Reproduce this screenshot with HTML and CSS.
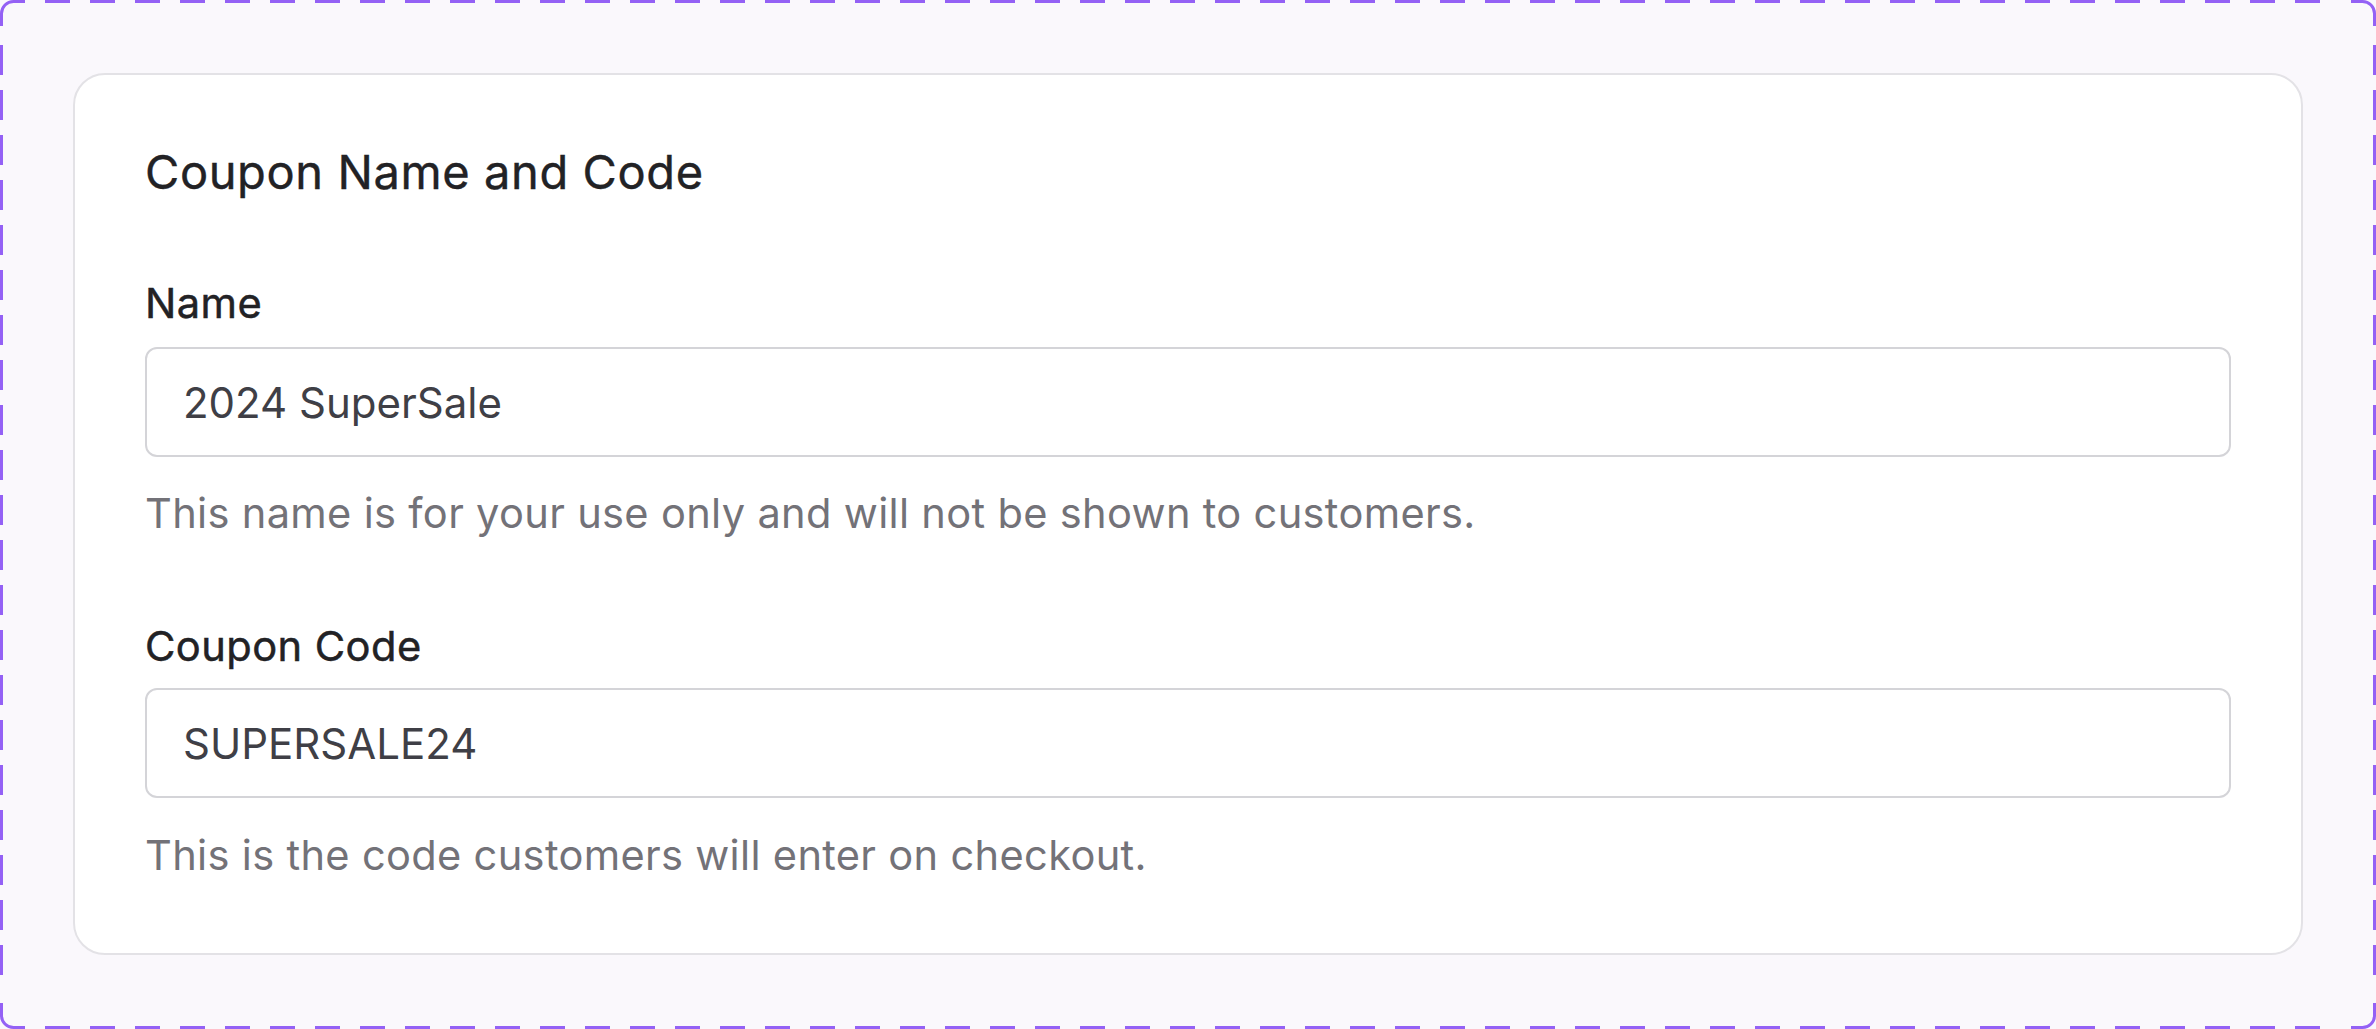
FILE: index.html
```html
<!DOCTYPE html>
<html lang="en">
<head>
<meta charset="utf-8">
<title>Coupon Name and Code</title>
<link rel="stylesheet" href="styles.css">
</head>
<body>
<svg class="frame" width="2376" height="1029" viewBox="0 0 2376 1029" aria-hidden="true">
  <g fill="none" stroke="#9461f5" stroke-width="3">
    <line x1="45" y1="1.5" x2="2331" y2="1.5" stroke-dasharray="25 20"/>
    <line x1="45" y1="1027.5" x2="2331" y2="1027.5" stroke-dasharray="25 20"/>
    <line x1="1.5" y1="45" x2="1.5" y2="984" stroke-dasharray="30 15"/>
    <line x1="2374.5" y1="45" x2="2374.5" y2="984" stroke-dasharray="30 15"/>
    <path d="M1.5 26 V13.5 A12 12 0 0 1 13.5 1.5 H25"/>
    <path d="M2351 1.5 H2362.5 A12 12 0 0 1 2374.5 13.5 V26"/>
    <path d="M1.5 1003 V1015.5 A12 12 0 0 0 13.5 1027.5 H25"/>
    <path d="M2351 1027.5 H2362.5 A12 12 0 0 0 2374.5 1015.5 V1003"/>
  </g>
</svg>
<main class="page">
  <section class="card">
    <h2 class="card-title">Coupon Name and Code</h2>
    <div class="field field-first">
      <label class="field-label" for="name">Name</label>
      <input class="field-input" id="name" type="text" value="2024 SuperSale">
      <p class="field-help">This name is for your use only and will not be shown to customers.</p>
    </div>
    <div class="field field-second">
      <label class="field-label" for="code">Coupon Code</label>
      <input class="field-input" id="code" type="text" value="SUPERSALE24">
      <p class="field-help">This is the code customers will enter on checkout.</p>
    </div>
  </section>
</main>
</body>
</html>
```

FILE: styles.css
```css
* {
  box-sizing: border-box;
}

html, body {
  margin: 0;
  padding: 0;
}

body {
  width: 2376px;
  height: 1029px;
  background: #faf8fc;
  font-family: Inter, "Noto Sans", "Liberation Sans", sans-serif;
  position: relative;
  overflow: hidden;
}

.frame {
  position: absolute;
  left: 0;
  top: 0;
  pointer-events: none;
}

.page {
  padding: 73px 73px 74px 73px;
}

.card {
  background: #ffffff;
  border: 2px solid #e3e2e6;
  border-radius: 32px;
  padding: 61px 70px 67px 70px;
}

.card-title {
  margin: 0;
  font-size: 47px;
  line-height: 72px;
  font-weight: 400;
  letter-spacing: 0.6px;
  color: #222225;
  -webkit-text-stroke: 0.4px #222225;
}

.field {
  display: flex;
  flex-direction: column;
}

.field-first {
  margin-top: 64px;
}

.field-second {
  margin-top: 71px;
}

.field-label {
  font-size: 41.6px;
  line-height: 62px;
  font-weight: 400;
  letter-spacing: 0.45px;
  color: #222225;
  margin-bottom: 13px;
  -webkit-text-stroke: 0.5px #222225;
}

.field-second .field-label {
  margin-bottom: 11px;
}

.field-input {
  display: block;
  width: 100%;
  height: 110px;
  margin: 0;
  padding: 0 36px;
  border: 2px solid #d4d4d8;
  border-radius: 12px;
  background: #ffffff;
  font-family: inherit;
  font-size: 42px;
  font-weight: 400;
  color: #3f3f46;
  outline: none;
}

.field-help {
  margin: 25px 0 0 0;
  font-size: 41.6px;
  line-height: 62px;
  font-weight: 400;
  letter-spacing: 0.32px;
  color: #737278;
}

.field-second .field-help {
  margin-top: 26px;
}
```
